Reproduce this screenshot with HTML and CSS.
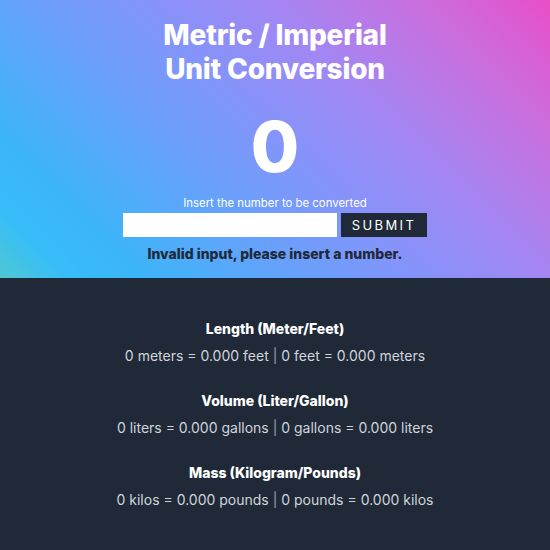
FILE: index.html
```html
<!DOCTYPE html>
<html lang="en">
<head>
<meta charset="utf-8">
<title>Metric / Imperial Unit Conversion</title>
<link rel="stylesheet" href="styles.css">
</head>
<body>
  <header class="hero">
    <h1 class="title">Metric / Imperial<br>Unit Conversion</h1>
    <div class="value">0</div>
    <label class="hint" for="num">Insert the number to be converted</label>
    <div class="form">
      <input id="num" class="input" type="text">
      <button class="submit" type="button">SUBMIT</button>
    </div>
    <p class="error">Invalid input, please insert a number.</p>
  </header>
  <main class="results">
    <section class="block">
      <h2 class="block-title">Length (Meter/Feet)</h2>
      <p class="block-text">0 meters = 0.000 feet <span class="sep">|</span> 0 feet = 0.000 meters</p>
    </section>
    <section class="block">
      <h2 class="block-title">Volume (Liter/Gallon)</h2>
      <p class="block-text">0 liters = 0.000 gallons <span class="sep">|</span> 0 gallons = 0.000 liters</p>
    </section>
    <section class="block">
      <h2 class="block-title">Mass (Kilogram/Pounds)</h2>
      <p class="block-text">0 kilos = 0.000 pounds <span class="sep">|</span> 0 pounds = 0.000 kilos</p>
    </section>
  </main>
</body>
</html>
```
FILE: styles.css
```css
* { box-sizing: border-box; }
html, body { margin: 0; padding: 0; }
body {
  font-family: Inter, "Noto Sans", sans-serif;
  background: #1f2937;
  height: 550px;
  overflow: hidden;
}
.hero {
  height: 278px;
  display: flex;
  flex-direction: column;
  align-items: center;
  padding-top: 18px;
  background: linear-gradient(45deg, #4fc8d2 0%, #38bdf8 8%, #3bb5f8 17%, #63a3fb 34%, #8394fa 50%, #a386f3 66%, #c870de 83%, #e84ec8 100%);
  color: #fff;
}
.title {
  margin: 0;
  font-size: 28px;
  line-height: 34px;
  font-weight: 800;
  text-align: center;
  letter-spacing: -0.2px;
}
.value {
  margin-top: 26px;
  font-size: 70px;
  line-height: 70px;
  font-weight: 800;
}
.hint {
  margin-top: 14px;
  font-size: 11.4px;
  line-height: 14px;
}
.form {
  margin-top: 3px;
  display: flex;
  gap: 4px;
}
.input {
  width: 214px;
  height: 24px;
  border: 0;
  margin: 0;
  padding: 0 6px;
  background: #fff;
  outline: none;
}
.submit {
  width: 86px;
  height: 24px;
  border: 0;
  margin: 0;
  padding: 0;
  background: #1f2937;
  color: #fff;
  font-family: inherit;
  font-size: 13px;
  letter-spacing: 2.4px;
}
.error {
  margin: 8px 0 0;
  color: #1f2937;
  font-size: 14px;
  line-height: 18px;
  font-weight: 800;
}
.results {
  padding-top: 41px;
  display: flex;
  flex-direction: column;
  gap: 25px;
  text-align: center;
}
.block-title {
  margin: 0;
  color: #fff;
  font-size: 14px;
  line-height: 20px;
  font-weight: 800;
}
.block-text {
  margin: 7px 0 0;
  color: #d1d5db;
  font-size: 14px;
  line-height: 20px;
}
.sep { color: #9ca3af; }
```
